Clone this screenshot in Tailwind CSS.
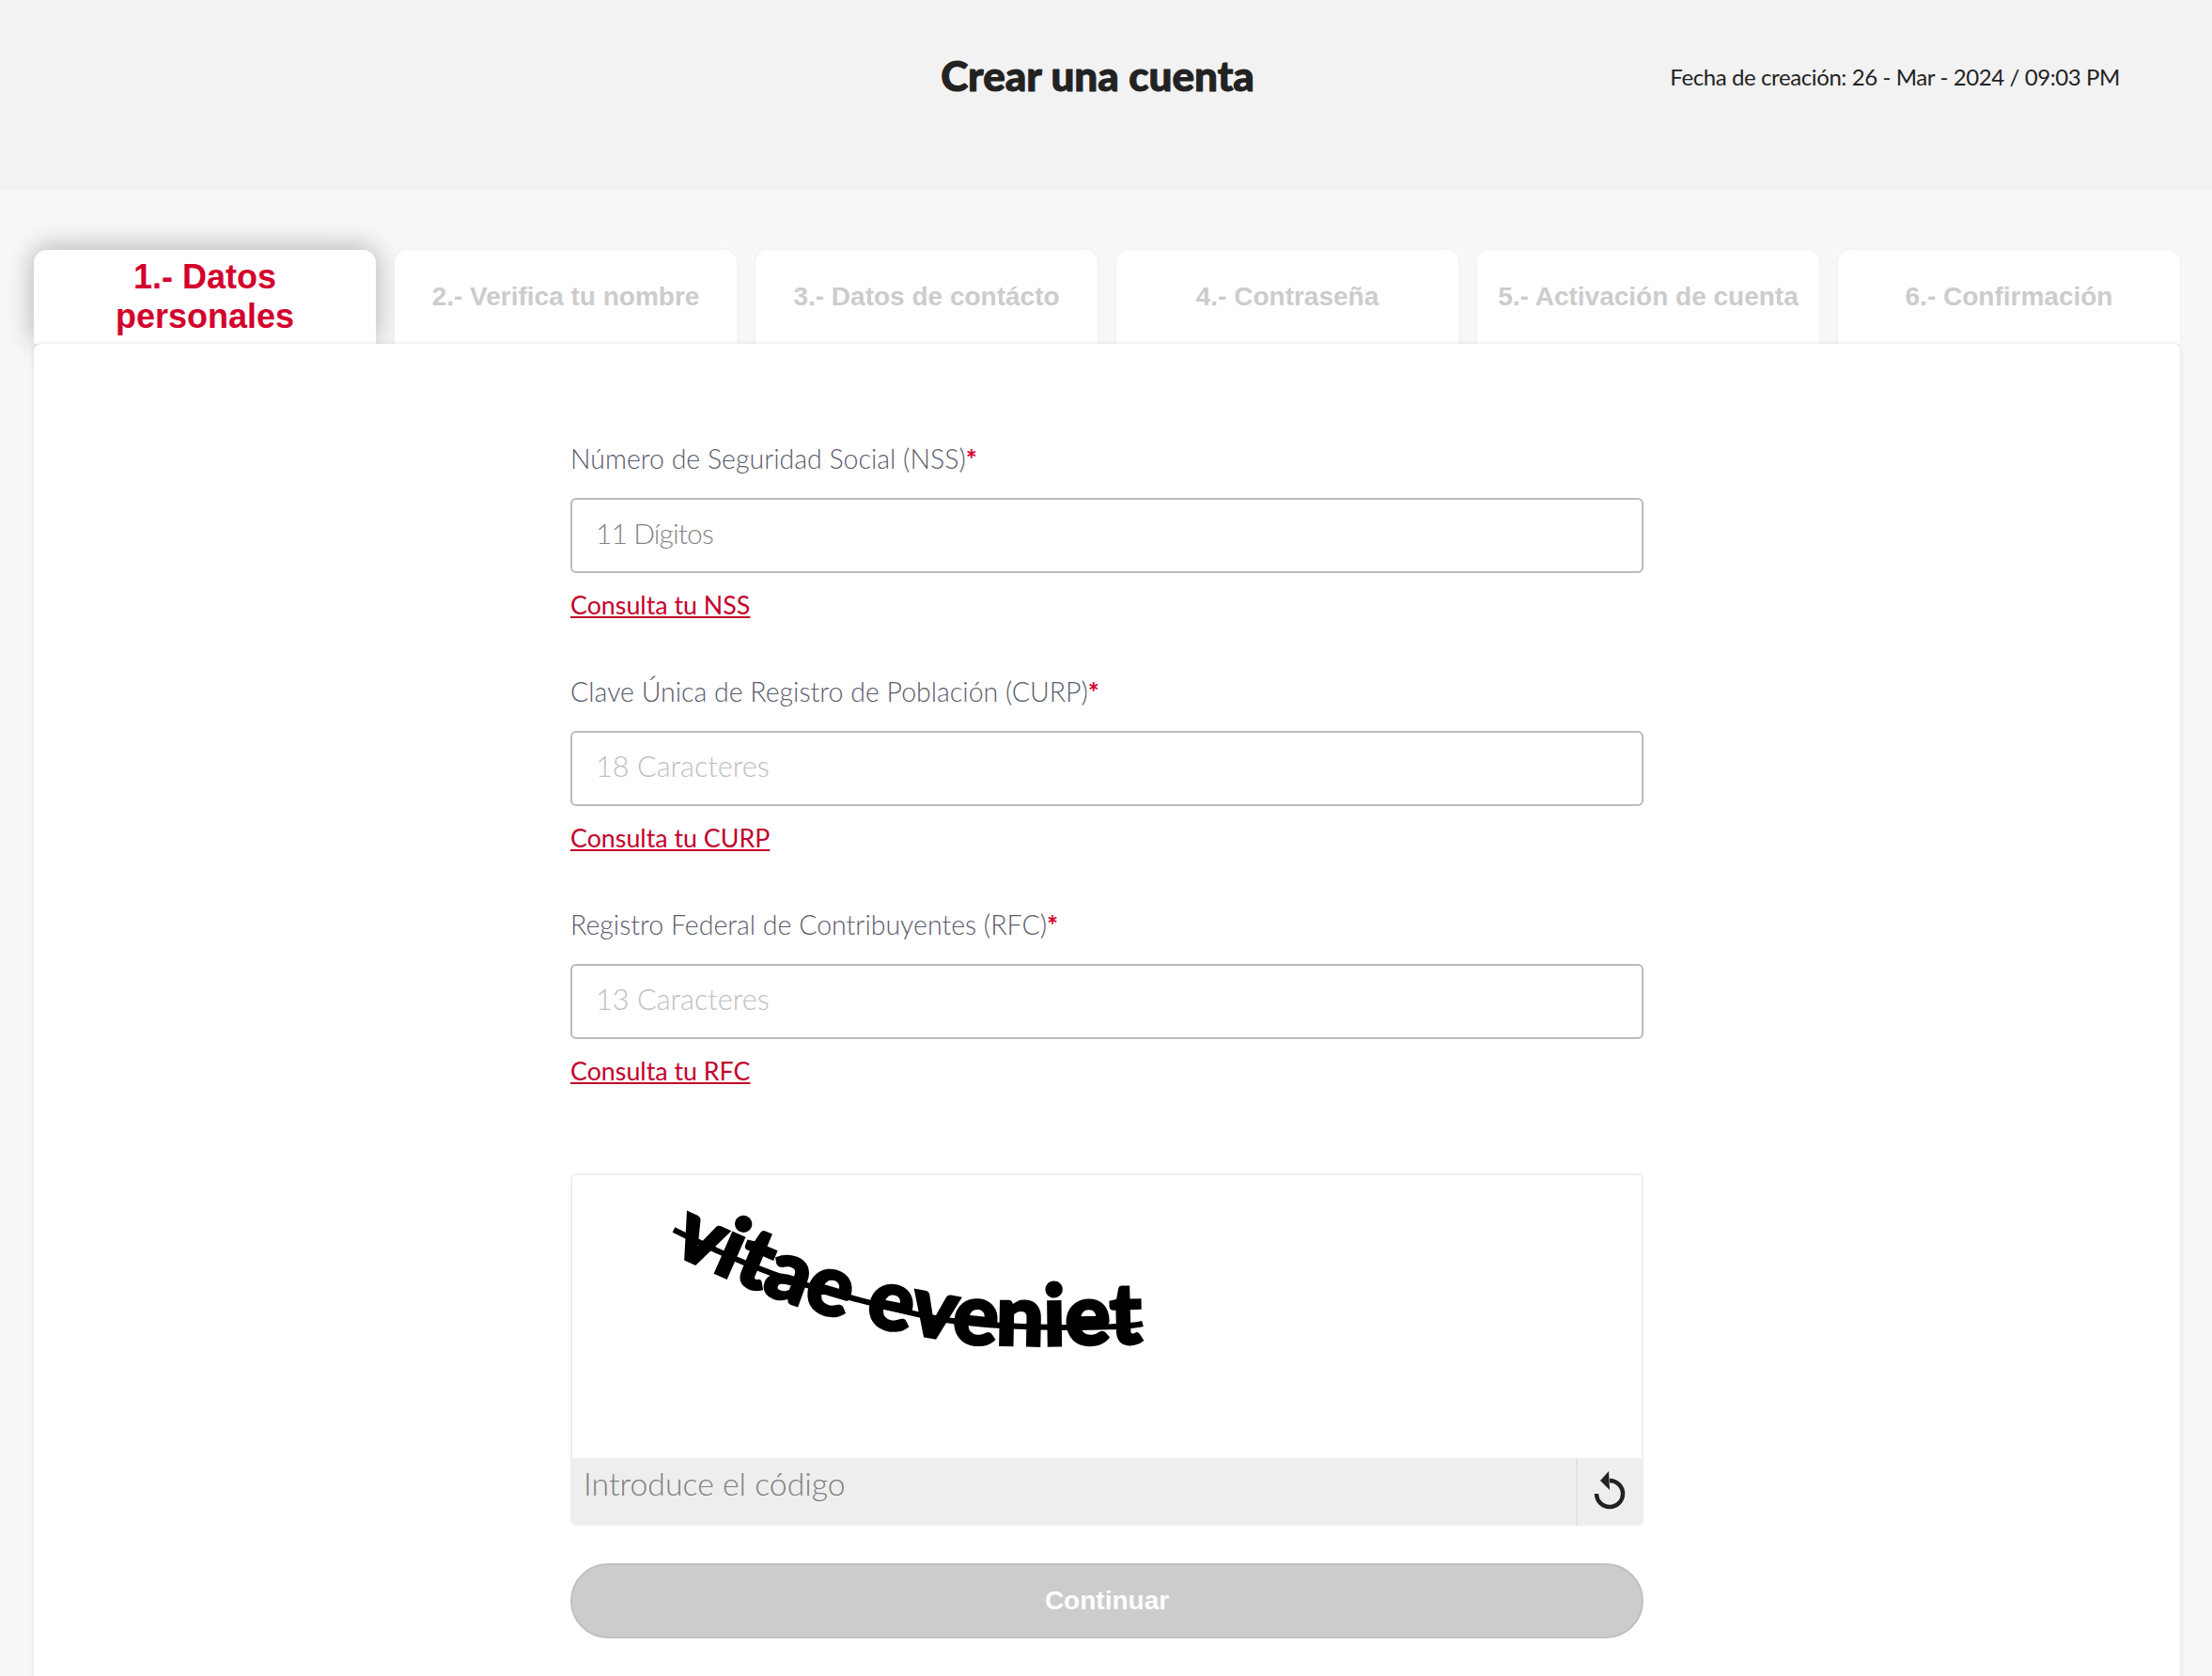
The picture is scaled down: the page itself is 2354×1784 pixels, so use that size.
<!DOCTYPE html>
<html lang="es">

<head>
    <meta charset="UTF-8">
    <meta name="viewport" content="width=device-width, initial-scale=1.0">
    <title>Crear una cuenta</title>
    <script src="https://cdn.jsdelivr.net/npm/@tailwindcss/browser@4"></script>
</head>

<body class="bg-[#f8f8f8] h-[1784px] overflow-hidden font-['Lato','Noto_Sans',sans-serif]">
    <!-- Encabezado -->
    <header class="relative h-[202px] bg-[#f2f2f2]">
        <h1 class="pt-[55px] pr-[18px] text-center text-[44px] leading-[50px] font-black text-[#222222] [-webkit-text-stroke:1px_#222222]">Crear una cuenta</h1>
        <p class="absolute right-[98px] top-[65px] text-[24px] leading-[34px] tracking-[-0.4px] text-[#222222]">Fecha de creación: 26 - Mar - 2024 / 09:03 PM</p>
    </header>

    <main class="pl-[36px] pr-[34px] pt-[64px]">
        <!-- Pasos -->
        <nav class="relative grid grid-cols-6 gap-[20px] font-['Liberation_Sans',Arial,sans-serif] font-bold text-center">
            <a class="flex h-[100px] items-center justify-center rounded-t-[14px] bg-white px-8 pb-[1px] text-[36px] leading-[42px] text-[#d3002c] shadow-[0_-2px_30px_rgba(0,0,0,0.3)]">1.- Datos personales</a>
            <a class="flex h-[100px] items-center justify-center rounded-t-[14px] bg-white text-[28px] leading-[34px] text-[#cccccc] shadow-[0_0_6px_rgba(0,0,0,0.04)]">2.- Verifica tu nombre</a>
            <a class="flex h-[100px] items-center justify-center rounded-t-[14px] bg-white text-[28px] leading-[34px] text-[#cccccc] shadow-[0_0_6px_rgba(0,0,0,0.04)]">3.- Datos de contácto</a>
            <a class="flex h-[100px] items-center justify-center rounded-t-[14px] bg-white text-[28px] leading-[34px] text-[#cccccc] shadow-[0_0_6px_rgba(0,0,0,0.04)]">4.- Contraseña</a>
            <a class="flex h-[100px] items-center justify-center rounded-t-[14px] bg-white text-[28px] leading-[34px] text-[#cccccc] shadow-[0_0_6px_rgba(0,0,0,0.04)]">5.- Activación de cuenta</a>
            <a class="flex h-[100px] items-center justify-center rounded-t-[14px] bg-white text-[28px] leading-[34px] text-[#cccccc] shadow-[0_0_6px_rgba(0,0,0,0.04)]">6.- Confirmación</a>
        </nav>

        <!-- Formulario -->
        <section class="relative h-[1500px] rounded-[8px] bg-white pt-[102px] shadow-[0_0_6px_rgba(0,0,0,0.1)]">
            <form class="mx-auto w-[1142px]">
                <div class="mb-[53px]">
                    <label class="mb-[22px] block text-[28.5px] font-light leading-[40px] text-[#5a5b6c]">Número de Seguridad Social (NSS)<span class="font-bold text-[#d3002c]">*</span></label>
                    <input type="text" placeholder="11 Dígitos" class="block h-[80px] w-full rounded-[6px] border-2 border-[#bbbbbb] px-[25px] pb-[6px] text-[30px] font-light tracking-[-0.9px] placeholder:text-[#858585]">
                    <a class="mt-[15px] block text-[26.8px] leading-[38px] text-[#c4002b] underline">Consulta tu NSS</a>
                </div>
                <div class="mb-[53px]">
                    <label class="mb-[22px] block text-[28.5px] font-light leading-[40px] text-[#5a5b6c]">Clave Única de Registro de Población (CURP)<span class="font-bold text-[#d3002c]">*</span></label>
                    <input type="text" placeholder="18 Caracteres" class="block h-[80px] w-full rounded-[6px] border-2 border-[#bbbbbb] px-[25px] pb-[6px] text-[30.7px] font-light placeholder:text-[#c0c0c0]">
                    <a class="mt-[15px] block text-[26.8px] leading-[38px] text-[#c4002b] underline">Consulta tu CURP</a>
                </div>
                <div>
                    <label class="mb-[22px] block text-[28.5px] font-light leading-[40px] text-[#5a5b6c]">Registro Federal de Contribuyentes (RFC)<span class="font-bold text-[#d3002c]">*</span></label>
                    <input type="text" placeholder="13 Caracteres" class="block h-[80px] w-full rounded-[6px] border-2 border-[#bbbbbb] px-[25px] pb-[6px] text-[30.7px] font-light placeholder:text-[#c0c0c0]">
                    <a class="mt-[15px] block text-[26.8px] leading-[38px] text-[#c4002b] underline">Consulta tu RFC</a>
                </div>

                <!-- Captcha -->
                <div class="mt-[90px] overflow-hidden rounded-[6px] border-2 border-b-0 border-[#eeeeee]">
                    <svg class="block h-[301px] w-full" viewBox="0 0 1138 301">
                        <defs>
                            <path id="captcha-base" d="M104 82 C 170 112 240 146 341 165 S 430 180 478 181 S 600 178 740 176"></path>
                        </defs>
                        <text font-family="Lato, sans-serif" font-weight="900" font-size="90" fill="#000000" stroke="#000000" stroke-width="3">
                            <textPath href="#captcha-base">vitae eveniet</textPath>
                        </text>
                        <path d="M108 58 C 160 84 210 108 295 130 S 400 158 480 161 S 600 160 607 158" fill="none" stroke="#000000" stroke-width="6"></path>
                    </svg>
                    <div class="flex h-[72px] bg-[#eeeeee]">
                        <input type="text" placeholder="Introduce el código" class="h-[54px] min-w-0 flex-1 bg-transparent pl-[12px] text-[33.8px] font-light placeholder:text-[#7f7f7f]">
                        <button type="button" class="flex w-[70px] items-center justify-center border-l-2 border-[#e2e2e2] pb-[2px]">
                            <svg class="h-[44px] w-[40px]" viewBox="0 0 40 44">
                                <path d="M20 11 A14 14 0 1 1 6 25" fill="none" stroke="#222222" stroke-width="4.5"></path>
                                <path d="M19 1 L10 11 L20 21 Z" fill="#222222"></path>
                            </svg>
                        </button>
                    </div>
                </div>

                <button type="button" class="mt-[40px] block h-[80px] w-full rounded-[40px] border-2 border-[#c0c0c0] bg-[#cccccc] font-['Liberation_Sans',Arial,sans-serif] text-[28px] font-bold text-white">Continuar</button>
            </form>
        </section>
    </main>
</body>

</html>
